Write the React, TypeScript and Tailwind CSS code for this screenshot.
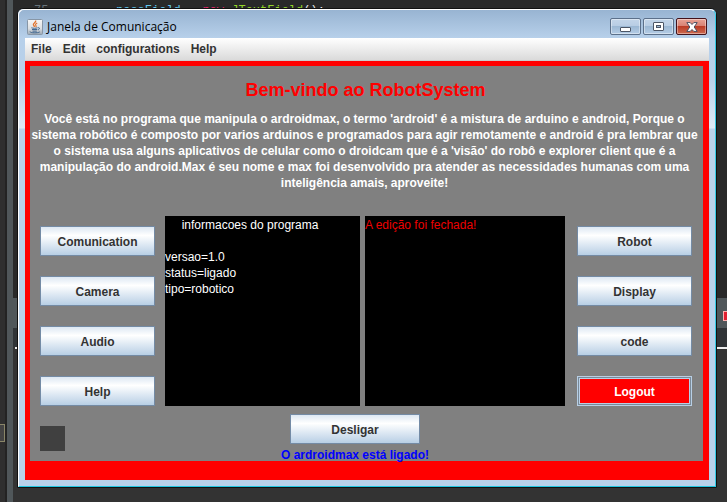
import React from "react";

const actionClass =
  "h-[30px] border border-[#748ba5] bg-linear-to-b from-[#dde8f3] via-white via-30% to-[#b8cfe5] pt-[2px] text-center text-xs leading-4 font-bold text-[#333333]";

function ActionButton({ label }: { label: string }) {
  return (
    <button type="button" className={actionClass}>
      {label}
    </button>
  );
}

function JavaIcon() {
  return (
    <svg width="16" height="16" viewBox="0 0 16 16" aria-hidden="true" className="shrink-0">
      <defs>
        <linearGradient id="javaTile" x1="0" y1="0" x2="0" y2="1">
          <stop offset="0" stopColor="#f6f6f6" />
          <stop offset="0.6" stopColor="#dcdfe2" />
          <stop offset="1" stopColor="#9aa6b2" />
        </linearGradient>
      </defs>
      <rect x="0.5" y="0.5" width="15" height="15" rx="1" fill="url(#javaTile)" stroke="#8796a6" />
      <path d="M8.600 1.500c1 1.700-2.600 2.400-2.200 4.200.2.900 1 1.200 1.200 2.200" fill="none" stroke="#e0702a" strokeWidth="1.300" />
      <path d="M10.200 4c-1.600.8-2.200 1.500-1.300 2.500.5.6.3 1.200-.2 1.600" fill="none" stroke="#e0702a" strokeWidth="1.100" />
      <path d="M4.400 8.800c1.600.6 4.600.6 6.200 0M5 10.500h5.300M5.500 12.100h4.300M11 8.800c2-.5 2 1.400 0 2.100M3 12.600c0 1.500 8 1.600 9.800.3" fill="none" stroke="#3f6690" strokeWidth="1" />
    </svg>
  );
}

function CaptionButtons() {
  const normal =
    "flex h-[17px] w-[31px] items-center justify-center rounded-xs border border-[#5c708a] bg-[linear-gradient(#c3d5e9_0%,#b8cde4_45%,#9cb8d4_50%,#b5cde6_100%)] shadow-[inset_0_0_0_1px_rgba(255,255,255,0.4)]";
  return (
    <div className="flex gap-[2px] pt-2">
      <button type="button" aria-label="Minimizar" className={normal}>
        <svg width="12" height="12" viewBox="0 0 12 12">
          <rect x="0.5" y="6.5" width="10" height="4" rx="0.5" fill="#fff" stroke="#4c5666" />
        </svg>
      </button>
      <button type="button" aria-label="Maximizar" className={normal}>
        <svg width="12" height="12" viewBox="0 0 12 12">
          <rect x="0.5" y="1.5" width="10" height="8" rx="0.5" fill="#fff" stroke="#4c5666" />
          <rect x="3.5" y="4.5" width="4" height="2" fill="#9fb8d2" stroke="#4c5666" />
        </svg>
      </button>
      <button
        type="button"
        aria-label="Fechar"
        className="flex h-[17px] w-[31px] items-center justify-center rounded-xs border border-[#43131c] bg-[linear-gradient(#e8a396_0%,#d88274_45%,#bb3c26_50%,#cc6a50_100%)] shadow-[inset_0_0_0_1px_rgba(255,255,255,0.4)]"
      >
        <svg width="12" height="10" viewBox="0 0 12 10">
          <path d="M.8.600h3.400L6 2.500 7.800.600h3.400L8.200 5l3 4.400H7.800L6 7.500 4.200 9.400H.8L3.800 5z" fill="#fff" stroke="#4a4f60" strokeWidth="1" />
        </svg>
      </button>
    </div>
  );
}

function EditorBackdrop() {
  return (
    <div className="absolute inset-0 flex overflow-hidden bg-[#333333]">
      <div className="flex w-[5px] shrink-0 flex-col bg-[#2f2f2f] pt-[424px]">
        <div className="h-[18px] border border-l-0 border-[#8a8668] bg-[#444444]" />
      </div>
      <div className="w-[2px] shrink-0 bg-[#232323]" />
      <div className="w-[6px] shrink-0 bg-[#50575a]" />
      <div className="flex min-w-0 grow flex-col">
        <div className="h-[298px] shrink-0 bg-[#292929] pt-1 pl-[21px] font-['Liberation_Mono',monospace] text-xs leading-[14px] whitespace-pre">
          <span className="inline-block w-[82px] text-[#68737a]">75</span>
          <span className="text-[#62c7ee]">passField</span>
          <span className="text-[#e8e8e8]"> = </span>
          <span className="text-[#f0266f]">new</span>
          <span className="text-[#93d529]"> JTextField</span>
          <span className="text-[#e8e8e8]">();</span>
        </div>
        <div className="flex h-[30px] shrink-0 items-center justify-end bg-[#50575a] pt-[6px]">
          <div className="h-[10px] w-[4px] border border-r-0 border-[#ffb0b0] bg-[#e02030]" />
        </div>
        <div className="h-[19px] shrink-0 bg-[#303437]" />
        <div className="ml-[2px] h-[2px] shrink-0 bg-[#eeeeee]" />
      </div>
    </div>
  );
}

export default function App() {
  return (
    <div className="relative min-h-screen overflow-hidden pt-2 pr-[10px] pb-[14px] pl-[17px] font-['Liberation_Sans',Arial,sans-serif]">
      <EditorBackdrop />
      <div className="relative rounded-t-md border border-[#111111] bg-[#b9d1ea]">
        <div className="rounded-t-md border border-t-white border-r-[#35cbe6] border-b-[#20c5e0] border-l-white bg-[linear-gradient(#98b4d2_0px,#b7d0ea_28px,#b9d1ea_70px,#dfe9f5_118px,#b9d1ea_119px)] pr-[6px] pb-[6px] pl-[6px]">
          <header className="flex h-7 justify-between pr-[2px] pl-[2px]">
            <div className="flex items-center gap-1 pt-[5px]">
              <JavaIcon />
              <h1 className="font-['Open_Sans','Noto_Sans',sans-serif] text-xs leading-4 text-black">Janela de Comunicação</h1>
            </div>
            <CaptionButtons />
          </header>
          <nav className="flex h-[23px] gap-[11px] border-b border-[#cccccc] bg-linear-to-b from-white to-[#dadada] pt-[3px] pl-[6px] text-xs leading-4 font-bold text-[#333333]">
            <button type="button" className="self-start">File</button>
            <button type="button" className="self-start">Edit</button>
            <button type="button" className="self-start">configurations</button>
            <button type="button" className="self-start">Help</button>
          </nav>
          <main className="bg-[#ff0000] pt-[5px] pr-[6px] pb-[19px] pl-[5px]">
            <div className="bg-[#808080] pt-3">
              <h2 className="pr-[2px] text-center text-lg leading-6 font-bold text-[#ff0000]">Bem-vindo ao RobotSystem</h2>
              <p className="mt-[9px] flex flex-col items-center pr-1 text-center text-xs leading-4 font-bold whitespace-nowrap text-white">
                <span>Você está no programa que manipula o ardroidmax, o termo 'ardroid' é a mistura de arduino e android, Porque o</span>
                <span>sistema robótico é composto por varios arduinos e programados para agir remotamente e android é pra lembrar que</span>
                <span>o sistema usa alguns aplicativos de celular como o droidcam que é a 'visão' do robô e explorer client que é a</span>
                <span>manipulação do android.Max é seu nome e max foi desenvolvido pra atender as necessidades humanas com uma</span>
                <span>inteligência amais, aproveite!</span>
              </p>
              <div className="mt-[25px] flex gap-[10px] pr-[11px] pl-[10px]">
                <div className="flex w-[115px] shrink-0 flex-col gap-5 pt-[10px]">
                  <ActionButton label="Comunication" />
                  <ActionButton label="Camera" />
                  <ActionButton label="Audio" />
                  <ActionButton label="Help" />
                </div>
                <div className="flex min-w-0 grow gap-[5px] pr-[2px]">
                  <textarea
                    readOnly
                    aria-label="informacoes do programa"
                    className="h-[190px] w-[195px] shrink-0 resize-none overflow-hidden bg-black pt-px text-xs leading-4 text-white outline-none"
                    value={"     informacoes do programa\n\nversao=1.0\nstatus=ligado\ntipo=robotico"}
                  />
                  <textarea
                    readOnly
                    aria-label="eventos"
                    className="h-[190px] min-w-0 grow resize-none overflow-hidden bg-black pt-px text-xs leading-4 text-[#ee0000] outline-none"
                    value="A edição foi fechada!"
                  />
                </div>
                <div className="flex w-[115px] shrink-0 flex-col gap-5 pt-[10px]">
                  <ActionButton label="Robot" />
                  <ActionButton label="Display" />
                  <ActionButton label="code" />
                  <button
                    type="button"
                    className="h-[30px] border border-[#b8cfe5] bg-[#ff0000] pt-[2px] text-center text-xs leading-4 font-bold text-white shadow-[inset_0_0_0_1px_#7a8a99,inset_0_0_0_2px_#b8cfe5]"
                  >
                    Logout
                  </button>
                </div>
              </div>
              <div className="flex justify-between pt-2 pr-[11px] pl-[10px]">
                <div className="w-[115px] pt-3">
                  <div className="size-[25px] bg-[#404040]" />
                </div>
                <div className="flex flex-col items-center pr-[22px]">
                  <button type="button" className={actionClass + " w-[130px]"}>
                    Desligar
                  </button>
                  <p className="mt-[3px] h-[14px] text-xs leading-4 font-bold text-[#0000ff]">O ardroidmax está ligado!</p>
                </div>
                <div className="w-[115px]" />
              </div>
            </div>
          </main>
        </div>
      </div>
    </div>
  );
}
